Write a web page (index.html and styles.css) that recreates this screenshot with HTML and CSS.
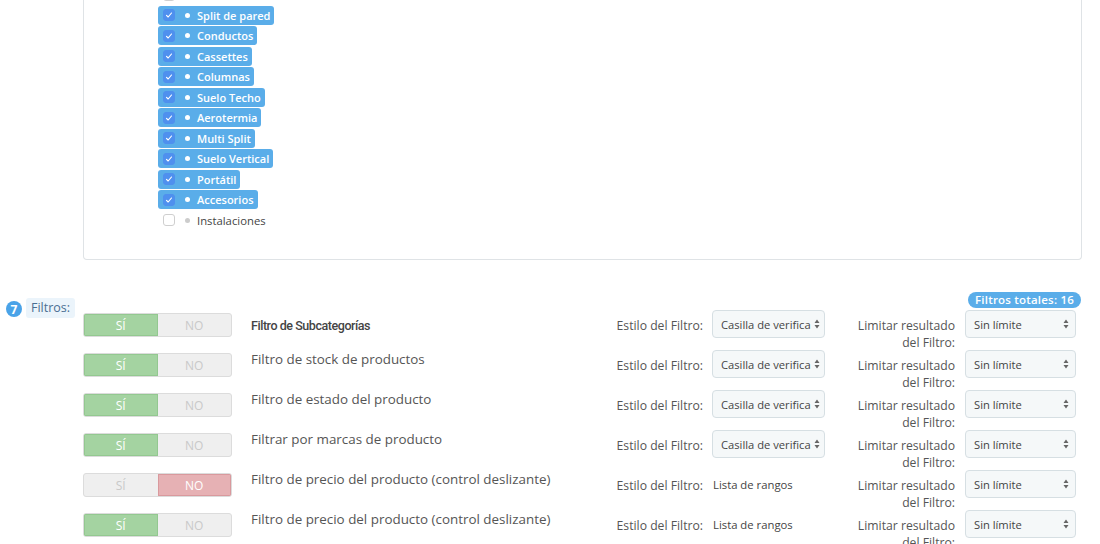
FILE: index.html
```html
<!DOCTYPE html>
<html lang="es">
<head>
<meta charset="utf-8">
<title>Filtros</title>
<link rel="stylesheet" href="styles.css">
</head>
<body>
<div class="card">
  <ul class="cat-list">
    <li class="cat"><span class="item"><span class="cb"></span></span></li>
    <li class="cat"><span class="item on"><span class="cb"><svg viewBox="0 0 12 12"><path d="M3 6.4l2 2 4-4.8" /></svg></span><span class="dot"></span><span class="name">Split de pared</span></span></li>
    <li class="cat"><span class="item on"><span class="cb"><svg viewBox="0 0 12 12"><path d="M3 6.4l2 2 4-4.8" /></svg></span><span class="dot"></span><span class="name">Conductos</span></span></li>
    <li class="cat"><span class="item on"><span class="cb"><svg viewBox="0 0 12 12"><path d="M3 6.4l2 2 4-4.8" /></svg></span><span class="dot"></span><span class="name">Cassettes</span></span></li>
    <li class="cat"><span class="item on"><span class="cb"><svg viewBox="0 0 12 12"><path d="M3 6.4l2 2 4-4.8" /></svg></span><span class="dot"></span><span class="name">Columnas</span></span></li>
    <li class="cat"><span class="item on"><span class="cb"><svg viewBox="0 0 12 12"><path d="M3 6.4l2 2 4-4.8" /></svg></span><span class="dot"></span><span class="name">Suelo Techo</span></span></li>
    <li class="cat"><span class="item on"><span class="cb"><svg viewBox="0 0 12 12"><path d="M3 6.4l2 2 4-4.8" /></svg></span><span class="dot"></span><span class="name">Aerotermia</span></span></li>
    <li class="cat"><span class="item on"><span class="cb"><svg viewBox="0 0 12 12"><path d="M3 6.4l2 2 4-4.8" /></svg></span><span class="dot"></span><span class="name">Multi Split</span></span></li>
    <li class="cat"><span class="item on"><span class="cb"><svg viewBox="0 0 12 12"><path d="M3 6.4l2 2 4-4.8" /></svg></span><span class="dot"></span><span class="name">Suelo Vertical</span></span></li>
    <li class="cat"><span class="item on"><span class="cb"><svg viewBox="0 0 12 12"><path d="M3 6.4l2 2 4-4.8" /></svg></span><span class="dot"></span><span class="name">Portátil</span></span></li>
    <li class="cat"><span class="item on"><span class="cb"><svg viewBox="0 0 12 12"><path d="M3 6.4l2 2 4-4.8" /></svg></span><span class="dot"></span><span class="name">Accesorios</span></span></li>
    <li class="cat"><span class="item"><span class="cb"></span><span class="dot"></span><span class="name">Instalaciones</span></span></li>
  </ul>
</div>

<section class="filters">
  <div class="step">
    <span class="step-num">7</span>
    <span class="step-label">Filtros:</span>
  </div>
  <div class="filter-body">
    <div class="total-row"><span class="badge">Filtros totales: 16</span></div>

    <div class="frow">
      <div class="switch"><span class="sw-yes active">SÍ</span><span class="sw-no">NO</span></div>
      <div class="ftitle alt">Filtro de Subcategorías</div>
      <div class="flabel">Estilo del Filtro:</div>
      <div class="select sel-style"><span>Casilla de verifica</span><svg class="arr" viewBox="0 0 6 10"><path d="M3 0.5L5.5 4H0.5Z M3 9.5L5.5 6H0.5Z"/></svg></div>
      <div class="flabel limit">Limitar resultado<br>del Filtro:</div>
      <div class="select sel-limit"><span>Sin límite</span><svg class="arr" viewBox="0 0 6 10"><path d="M3 0.5L5.5 4H0.5Z M3 9.5L5.5 6H0.5Z"/></svg></div>
    </div>

    <div class="frow">
      <div class="switch"><span class="sw-yes active">SÍ</span><span class="sw-no">NO</span></div>
      <div class="ftitle">Filtro de stock de productos</div>
      <div class="flabel">Estilo del Filtro:</div>
      <div class="select sel-style"><span>Casilla de verifica</span><svg class="arr" viewBox="0 0 6 10"><path d="M3 0.5L5.5 4H0.5Z M3 9.5L5.5 6H0.5Z"/></svg></div>
      <div class="flabel limit">Limitar resultado<br>del Filtro:</div>
      <div class="select sel-limit"><span>Sin límite</span><svg class="arr" viewBox="0 0 6 10"><path d="M3 0.5L5.5 4H0.5Z M3 9.5L5.5 6H0.5Z"/></svg></div>
    </div>

    <div class="frow">
      <div class="switch"><span class="sw-yes active">SÍ</span><span class="sw-no">NO</span></div>
      <div class="ftitle">Filtro de estado del producto</div>
      <div class="flabel">Estilo del Filtro:</div>
      <div class="select sel-style"><span>Casilla de verifica</span><svg class="arr" viewBox="0 0 6 10"><path d="M3 0.5L5.5 4H0.5Z M3 9.5L5.5 6H0.5Z"/></svg></div>
      <div class="flabel limit">Limitar resultado<br>del Filtro:</div>
      <div class="select sel-limit"><span>Sin límite</span><svg class="arr" viewBox="0 0 6 10"><path d="M3 0.5L5.5 4H0.5Z M3 9.5L5.5 6H0.5Z"/></svg></div>
    </div>

    <div class="frow">
      <div class="switch"><span class="sw-yes active">SÍ</span><span class="sw-no">NO</span></div>
      <div class="ftitle">Filtrar por marcas de producto</div>
      <div class="flabel">Estilo del Filtro:</div>
      <div class="select sel-style"><span>Casilla de verifica</span><svg class="arr" viewBox="0 0 6 10"><path d="M3 0.5L5.5 4H0.5Z M3 9.5L5.5 6H0.5Z"/></svg></div>
      <div class="flabel limit">Limitar resultado<br>del Filtro:</div>
      <div class="select sel-limit"><span>Sin límite</span><svg class="arr" viewBox="0 0 6 10"><path d="M3 0.5L5.5 4H0.5Z M3 9.5L5.5 6H0.5Z"/></svg></div>
    </div>

    <div class="frow">
      <div class="switch"><span class="sw-yes">SÍ</span><span class="sw-no active">NO</span></div>
      <div class="ftitle">Filtro de precio del producto (control deslizante)</div>
      <div class="flabel">Estilo del Filtro:</div>
      <div class="fvalue">Lista de rangos</div>
      <div class="flabel limit">Limitar resultado<br>del Filtro:</div>
      <div class="select sel-limit"><span>Sin límite</span><svg class="arr" viewBox="0 0 6 10"><path d="M3 0.5L5.5 4H0.5Z M3 9.5L5.5 6H0.5Z"/></svg></div>
    </div>

    <div class="frow">
      <div class="switch"><span class="sw-yes active">SÍ</span><span class="sw-no">NO</span></div>
      <div class="ftitle">Filtro de precio del producto (control deslizante)</div>
      <div class="flabel">Estilo del Filtro:</div>
      <div class="fvalue">Lista de rangos</div>
      <div class="flabel limit">Limitar resultado<br>del Filtro:</div>
      <div class="select sel-limit"><span>Sin límite</span><svg class="arr" viewBox="0 0 6 10"><path d="M3 0.5L5.5 4H0.5Z M3 9.5L5.5 6H0.5Z"/></svg></div>
    </div>
  </div>
</section>
</body>
</html>
```

FILE: styles.css
```css
* { box-sizing: border-box; }

html, body {
  margin: 0;
  padding: 0;
  background: #fff;
  font-family: "Open Sans", "Noto Sans", sans-serif;
  color: #555;
  overflow: hidden;
}

.card {
  margin-left: 83px;
  width: 999px;
  border: 1px solid #dfe3e6;
  border-top: none;
  border-radius: 0 0 4px 4px;
  padding: 0 0 28px 74px;
}

.cat-list {
  list-style: none;
  margin: -15px 0 0 0;
  padding: 0;
}

.cat {
  height: 20.5px;
  display: flex;
  align-items: flex-start;
}

.item {
  display: inline-flex;
  align-items: center;
  height: 19px;
  padding: 0 4px 0 5px;
  border-radius: 3px;
  font-size: 11.3px;
  color: #444;
}

.item.on {
  background: #5aade9;
  color: #fff;
  font-weight: 600;
  font-size: 11px;
}

.cb {
  width: 12px;
  height: 12px;
  border: 1px solid #cfcfcf;
  border-radius: 3px;
  background: #fff;
  display: inline-flex;
  align-items: center;
  justify-content: center;
}

.item.on .cb {
  background: #4f90ee;
  border-color: #4f90ee;
}

.cb svg {
  width: 12px;
  height: 12px;
  fill: none;
  stroke: #fff;
  stroke-width: 1.4;
  stroke-linecap: round;
  stroke-linejoin: round;
}

.dot {
  width: 5px;
  height: 5px;
  border-radius: 50%;
  background: #ccc;
  margin: 0 7px 0 10px;
}

.item.on .dot { background: #fff; }

.name { line-height: 19px; }

/* Filters section */
.filters {
  display: grid;
  grid-template-columns: 83px 1fr;
  margin-top: 32px;
}

.step {
  display: flex;
  align-items: center;
  padding-top: 6px;
  align-self: start;
  padding-left: 6px;
}

.step-num {
  width: 16px;
  height: 16px;
  border-radius: 50%;
  background: #4aa3e8;
  color: #fff;
  font-size: 12px;
  font-weight: 700;
  display: inline-flex;
  align-items: center;
  justify-content: center;
  margin-top: 2px;
}

.step-label {
  margin-left: 4px;
  background: #ebf4fb;
  color: #4a6f92;
  font-size: 12.5px;
  line-height: 20px;
  padding: 0 5px;
  border-radius: 3px;
}

.filter-body {
  width: 998px;
}

.total-row {
  display: flex;
  justify-content: flex-end;
  height: 18px;
}

.badge {
  height: 16px;
  line-height: 16px;
  padding: 0 7px;
  border-radius: 8px;
  background: #5aade9;
  color: #fff;
  font-size: 11.5px;
  font-weight: 600;
  letter-spacing: 0.2px;
}

.frow {
  display: flex;
  align-items: flex-start;
  height: 40px;
}

.switch {
  width: 149px;
  height: 24px;
  margin-top: 3px;
  display: flex;
  border: 1px solid #dcdcdc;
  border-radius: 3px;
  background: #efefef;
  overflow: hidden;
}

.switch span {
  flex: 1;
  display: flex;
  align-items: center;
  justify-content: center;
  font-size: 12px;
  color: #c9c9c9;
}

.switch .sw-yes.active {
  background: #a4d3a1;
  color: #fff;
  box-shadow: inset 0 0 0 1px #93c890;
}

.switch .sw-no.active {
  background: #e6b1b4;
  color: #fff;
  box-shadow: inset 0 0 0 1px #d9999d;
}

.ftitle {
  width: 350px;
  margin-left: 19px;
  font-size: 13.4px;
  line-height: 20px;
  color: #555;
  margin-top: -1px;
}

.ftitle.alt {
  font-family: "Roboto", "Noto Sans", sans-serif;
  font-size: 12.5px;
  font-weight: 500;
  letter-spacing: -0.45px;
  color: #444;
  margin-top: 6px;
}

.flabel {
  width: 102px;
  text-align: right;
  font-size: 12.2px;
  line-height: 17px;
  padding-top: 7px;
  color: #555;
  white-space: nowrap;
}

.flabel.limit {
  width: 130px;
}

.select {
  height: 28px;
  border: 1px solid #d6dfe3;
  border-radius: 4px;
  background: #f5f8f9;
  display: flex;
  align-items: center;
  justify-content: space-between;
  font-size: 11.2px;
  color: #444;
  padding: 0 4px 0 8px;
}

.sel-style {
  width: 113px;
  margin-left: 9px;
}

.sel-limit {
  width: 111px;
  margin-left: 10px;
  padding-right: 6px;
}

.select span {
  white-space: nowrap;
  overflow: hidden;
}

.arr {
  width: 6px;
  height: 10px;
  flex: none;
  fill: #666;
}

.fvalue {
  width: 113px;
  margin-left: 9px;
  padding-left: 1px;
  font-size: 11.3px;
  line-height: 17px;
  padding-top: 6px;
  color: #444;
}
```
